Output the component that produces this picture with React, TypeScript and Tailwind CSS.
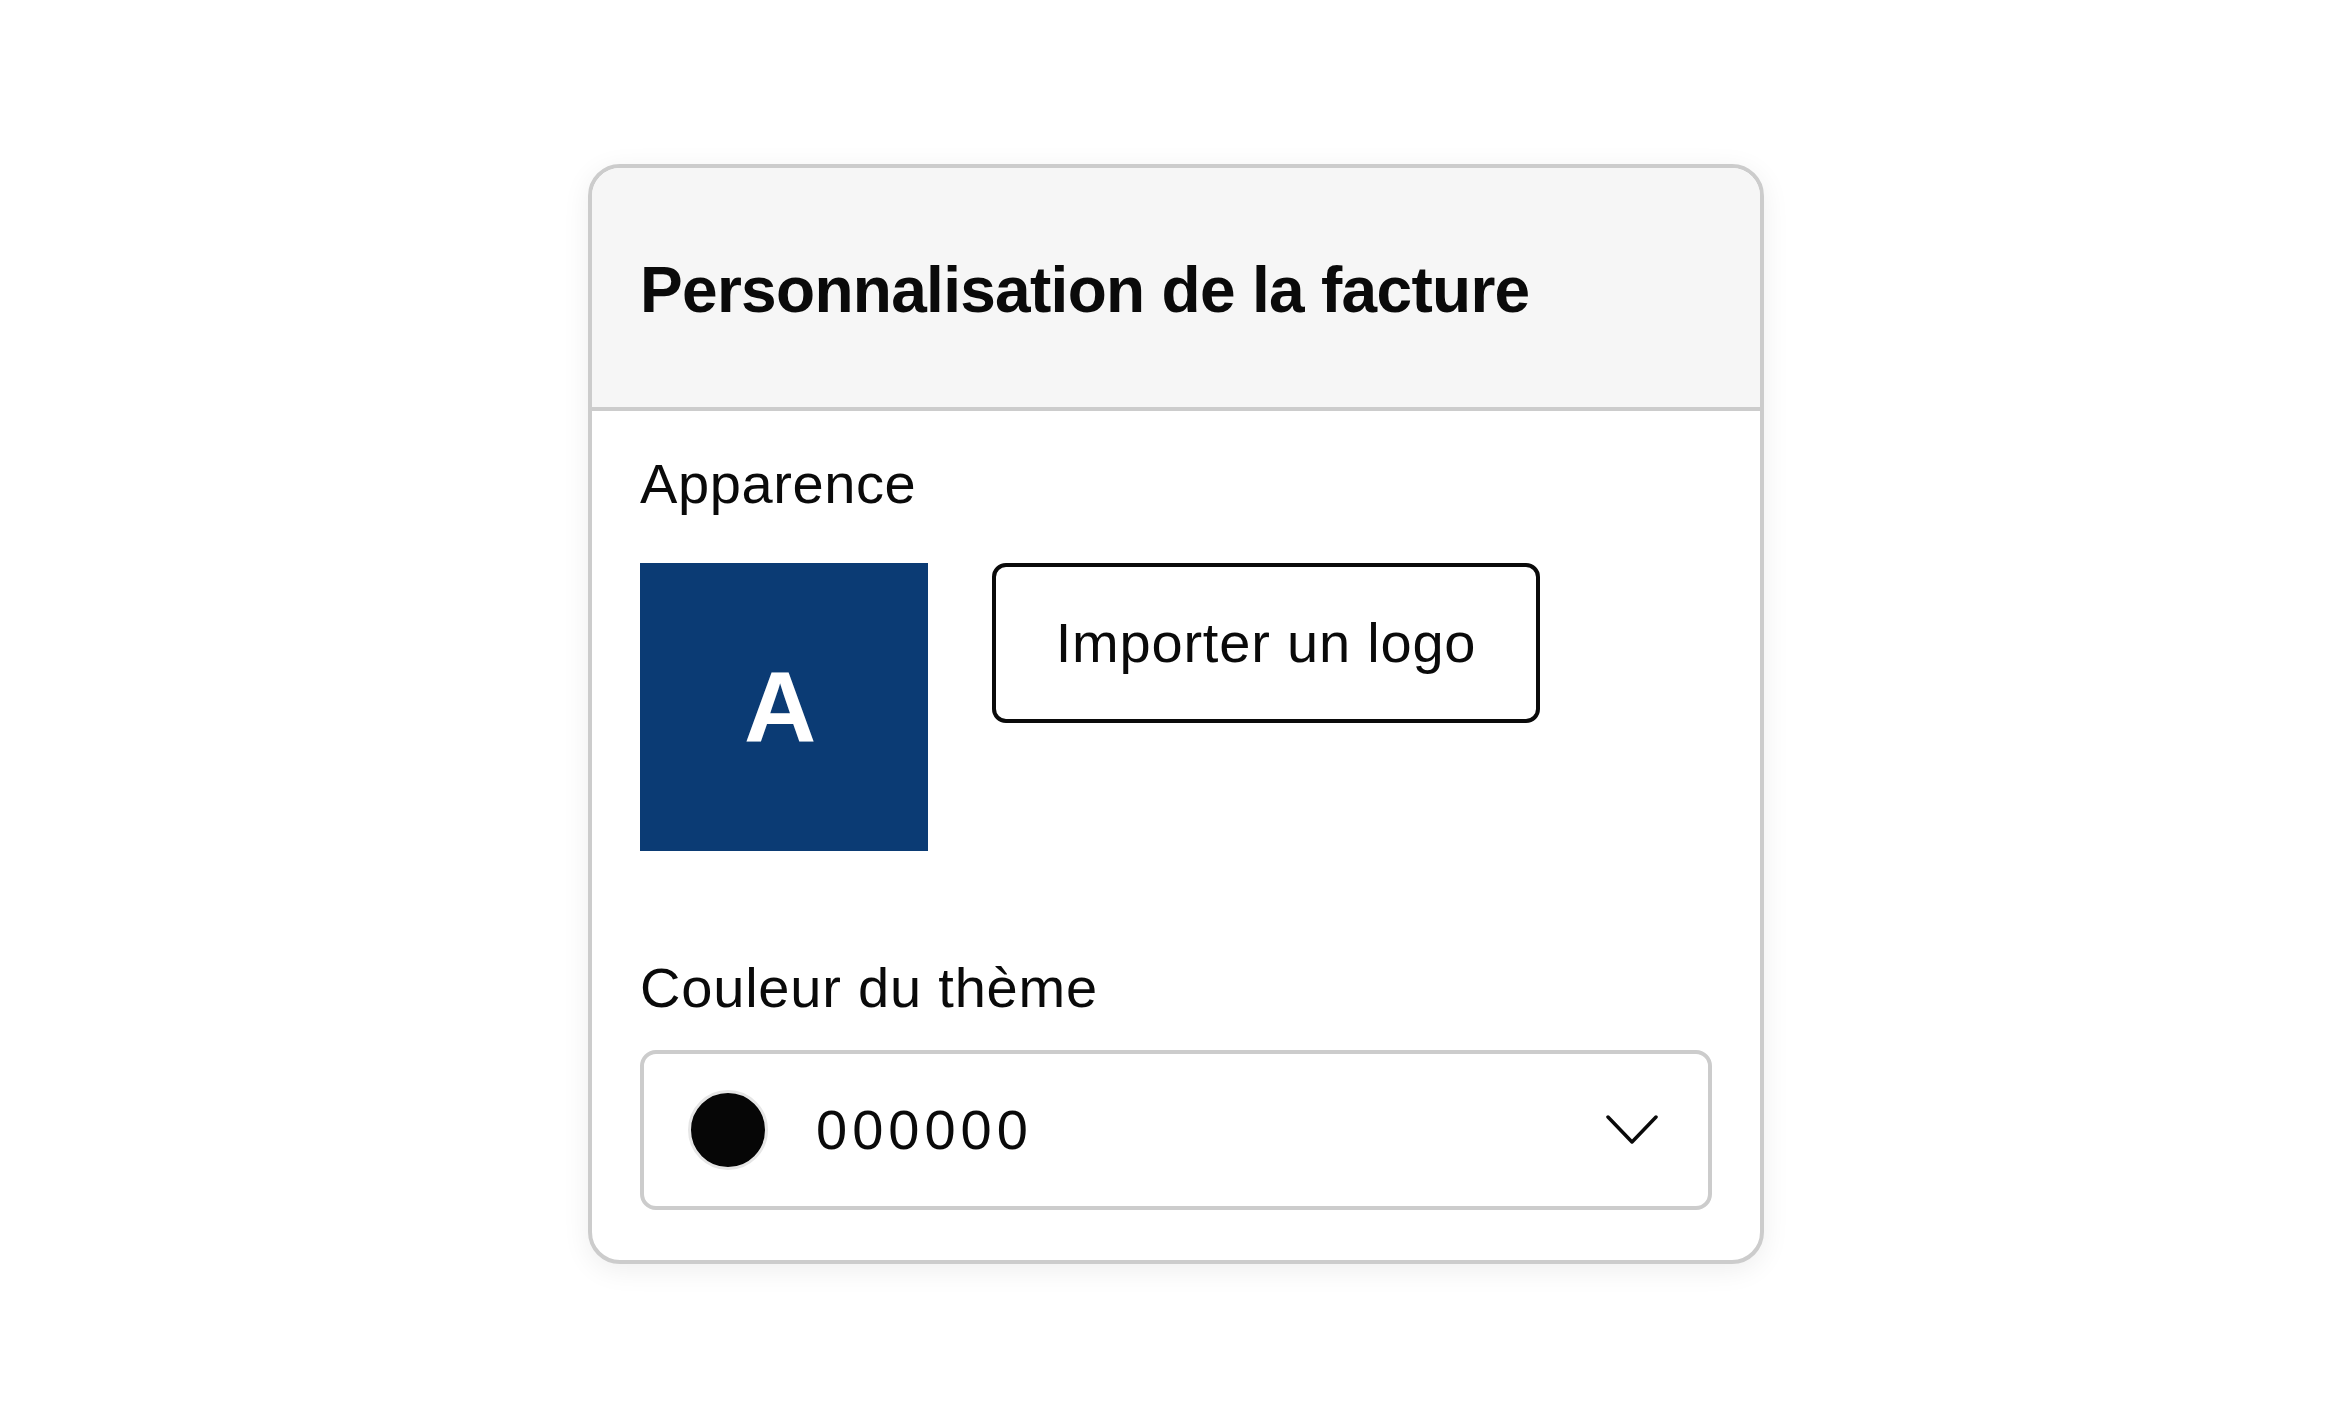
import { useState } from "react";

function Chevron() {
  return (
    <svg width="52" height="30" viewBox="0 0 52 30" fill="none">
      <polyline points="2,2 26,27 50,2" stroke="#0a0a0a" strokeWidth="3.5" strokeLinecap="round" strokeLinejoin="round" />
    </svg>
  );
}

export default function App() {
  const [color] = useState("000000");

  return (
    <div className="min-h-screen bg-white pt-[164px] font-['Liberation_Sans',Arial,sans-serif] text-[#0a0a0a]">
      <div className="mx-auto w-[1176px] h-[1100px] rounded-[32px] border-4 border-[#cccccc] bg-white overflow-hidden shadow-[0_6px_28px_rgba(0,0,0,0.07)]">
        <div className="h-[243px] bg-[#f6f6f6] border-b-4 border-[#cccccc] px-12 pt-[85px]">
          <h1 className="text-[64px] leading-[74px] font-bold tracking-[-0.7px]">Personnalisation de la facture</h1>
        </div>

        <div className="px-12 pt-[41px] pb-12">
          <p className="text-[56px] leading-[64px] tracking-[0.6px]">Apparence</p>

          <div className="flex items-start gap-16 mt-[47px]">
            <div className="w-[288px] h-[288px] bg-[#0b3b74] flex items-center justify-center pr-2">
              <span className="text-white font-bold text-[100px]">A</span>
            </div>
            <button className="w-[548px] h-[160px] rounded-[14px] border-4 border-[#0a0a0a] bg-white flex items-center justify-center text-[56px] tracking-[0.8px]">
              Importer un logo
            </button>
          </div>

          <p className="text-[56px] leading-[64px] mt-[105px] tracking-[0.8px]">Couleur du thème</p>

          <div className="mt-[30px] h-[160px] rounded-[16px] border-4 border-[#cccccc] flex items-center pl-[44px] pr-[50px]">
            <span className="w-20 h-20 rounded-full bg-[#060606] border-[3px] border-[#e6e6e6] shrink-0" />
            <span className="ml-12 text-[56px] tracking-[5px]">{color}</span>
            <span className="ml-auto flex items-center">
              <Chevron />
            </span>
          </div>
        </div>
      </div>
    </div>
  );
}
